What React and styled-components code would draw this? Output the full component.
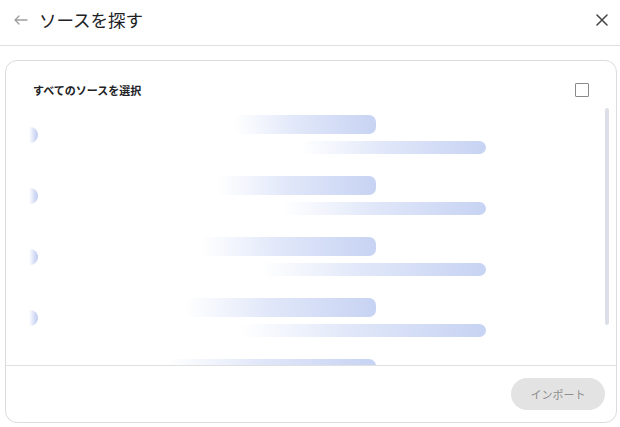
import React from "react";
import styled, { createGlobalStyle } from "styled-components";

const GlobalStyle = createGlobalStyle`
  html, body {
    margin: 0;
    padding: 0;
    background: #ffffff;
  }
  body {
    font-family: "Noto Sans CJK JP", "Noto Sans", sans-serif;
    color: #202124;
  }
`;

const rows = [
  { top: 57, bottom: 58 },
  { top: 52, bottom: 54 },
  { top: 47, bottom: 49 },
  { top: 42, bottom: 44 },
  { top: 37, bottom: 40 },
];

const BackIcon = () => (
  <svg width="14" height="10" viewBox="0 0 14 10" fill="none">
    <path
      d="M5 1 L1 5 L5 9 M1 5 H13"
      stroke="#9e9e9e"
      strokeWidth="1.3"
      strokeLinecap="round"
      strokeLinejoin="round"
    />
  </svg>
);

const CloseIcon = () => (
  <svg width="12" height="12" viewBox="0 0 12 12" fill="none">
    <path
      d="M1 1 L11 11 M11 1 L1 11"
      stroke="#444"
      strokeWidth="1.5"
      strokeLinecap="round"
    />
  </svg>
);

export default function App() {
  return (
    <>
      <GlobalStyle />
      <Page>
        <Header>
          <BackButton>
            <BackIcon />
          </BackButton>
          <Title>ソースを探す</Title>
          <CloseButton>
            <CloseIcon />
          </CloseButton>
        </Header>
        <Card>
          <CardHead>
            <SelectAll>すべてのソースを選択</SelectAll>
            <Checkbox />
          </CardHead>
          <List>
            {rows.map((r, i) => (
              <Row key={i}>
                <Avatar />
                <Lines>
                  <TopBar $fade={r.top} />
                  <BottomBar $fade={r.bottom} />
                </Lines>
              </Row>
            ))}
            <ScrollThumb />
          </List>
          <Footer>
            <ImportButton disabled>インポート</ImportButton>
          </Footer>
        </Card>
      </Page>
    </>
  );
}

const Page = styled.div`
  display: flex;
  flex-direction: column;
  width: 620px;
  height: 427px;
  overflow: hidden;
`;

const Header = styled.header`
  display: flex;
  align-items: center;
  height: 46px;
  padding: 0 12px 5px 13px;
  box-sizing: border-box;
  border-bottom: 1px solid #e0e0e0;
  flex-shrink: 0;
`;

const BackButton = styled.span`
  display: flex;
  align-items: center;
  padding: 0 11px 0 1px;
`;

const Title = styled.h1`
  flex: 1;
  margin: 0;
  font-size: 17.5px;
  font-weight: 400;
  color: #202124;
  line-height: 1;
`;

const CloseButton = styled.span`
  display: flex;
  align-items: center;
`;

const Card = styled.section`
  display: flex;
  flex-direction: column;
  flex: 1;
  margin: 14px 3px 4px 5px;
  border: 1px solid #dcdcdc;
  border-radius: 12px;
  overflow: hidden;
  min-height: 0;
`;

const CardHead = styled.div`
  display: flex;
  align-items: center;
  justify-content: space-between;
  padding: 21px 27px 8px 27px;
  height: 15px;
  box-sizing: content-box;
  flex-shrink: 0;
`;

const SelectAll = styled.span`
  font-size: 11px;
  font-weight: 700;
  color: #202124;
`;

const Checkbox = styled.span`
  width: 12px;
  height: 12px;
  border: 1px solid #8a8a8a;
  border-radius: 1px;
`;

const List = styled.div`
  position: relative;
  flex: 1;
  min-height: 0;
  overflow: hidden;
  display: flex;
  flex-direction: column;
  gap: 22px;
  padding: 10px 0 0 16px;
`;

const Row = styled.div`
  display: flex;
  align-items: center;
  gap: 8px;
  flex-shrink: 0;
`;

const Avatar = styled.span`
  width: 16px;
  height: 16px;
  border-radius: 50%;
  flex-shrink: 0;
  background: linear-gradient(
    90deg,
    rgba(200, 210, 242, 0) 45%,
    rgba(200, 210, 242, 0.8) 80%,
    #bfcbf0 100%
  );
`;

const Lines = styled.div`
  display: flex;
  flex-direction: column;
  gap: 7px;
`;

const barGradient = (fade) => `linear-gradient(
    90deg,
    rgba(205, 216, 245, 0) ${fade}%,
    rgba(214, 223, 247, 0.75) ${fade + (100 - fade) * 0.45}%,
    #c7d3f3 100%
  )`;

const TopBar = styled.span`
  display: block;
  width: 330px;
  height: 19px;
  border-radius: 7px;
  background: ${(p) => barGradient(p.$fade)};
`;

const BottomBar = styled.span`
  display: block;
  width: 440px;
  height: 13px;
  border-radius: 7px;
  background: ${(p) => barGradient(p.$fade)};
`;

const ScrollThumb = styled.span`
  position: absolute;
  top: 3px;
  right: 7px;
  width: 4px;
  height: 217px;
  border-radius: 2px;
  background: #dcdfe8;
`;

const Footer = styled.footer`
  display: flex;
  align-items: center;
  justify-content: flex-end;
  height: 56px;
  padding: 0 11px;
  border-top: 1px solid #e0e0e0;
  flex-shrink: 0;
`;

const ImportButton = styled.button`
  width: 94px;
  height: 32px;
  border: none;
  border-radius: 16px;
  background: #e3e3e3;
  color: #8e8e8e;
  font-family: "Noto Sans CJK JP", "Noto Sans", sans-serif;
  font-size: 11px;
  cursor: default;
`;
